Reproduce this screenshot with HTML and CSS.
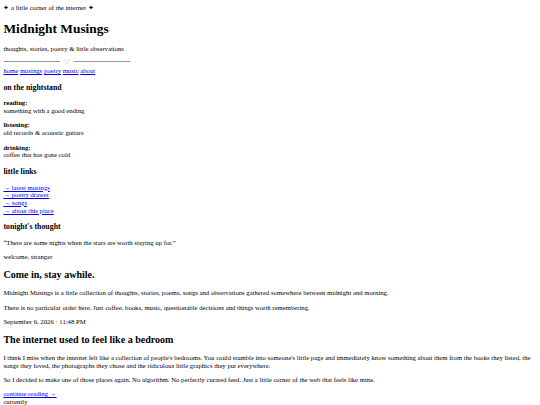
FILE: index.html
```html
<!DOCTYPE html>
<html lang="en">
<head>
<meta charset="utf-8">
<title>Midnight Musings</title>
<link rel="stylesheet" href="styles.css">
</head>
<body class="page">
<header class="site-header">
  <div class="tagline">✦ a little corner of the internet ✦</div>
  <h1 class="site-title">Midnight Musings</h1>
  <p class="subtitle">thoughts, stories, poetry &amp; little observations</p>
  <div class="divider"><span class="rule">──────────────</span> <span class="heart">♡</span> <span class="rule">──────────────</span></div>
  <nav class="nav"><a href="#">home</a> <a href="#">musings</a> <a href="#">poetry</a> <a href="#">music</a> <a href="#">about</a></nav>
</header>
<aside class="sidebar">
  <h3 class="side-title">on the nightstand</h3>
  <p class="item"><strong>reading:</strong><br>something with a good ending</p>
  <p class="item"><strong>listening:</strong><br>old records &amp; acoustic guitars</p>
  <p class="item"><strong>drinking:</strong><br>coffee that has gone cold</p>
  <h3 class="side-title">little links</h3>
  <div class="links">
    <a href="#">→ latest musings</a><br>
    <a href="#">→ poetry drawer</a><br>
    <a href="#">→ songs</a><br>
    <a href="#">→ about this place</a>
  </div>
  <h3 class="side-title">tonight's thought</h3>
  <p class="quote">“There are some nights when the stars are worth staying up for.”</p>
  <p class="welcome">welcome, stranger</p>
</aside>
<main class="content">
  <h2 class="intro-title">Come in, stay awhile.</h2>
  <p>Midnight Musings is a little collection of thoughts, stories, poems, songs and observations gathered somewhere between midnight and morning.</p>
  <p>There is no particular order here. Just coffee, books, music, questionable decisions and things worth remembering.</p>
  <article class="post">
    <p class="post-date">September 6, 2026 · 11:48 PM</p>
    <h2 class="post-title">The internet used to feel like a bedroom</h2>
    <p>I think I miss when the internet felt like a collection of people's bedrooms. You could stumble into someone's little page and immediately know something about them from the books they listed, the songs they loved, the photographs they chose and the ridiculous little graphics they put everywhere.</p>
    <p>So I decided to make one of those places again. No algorithm. No perfectly curated feed. Just a little corner of the web that feels like mine.</p>
    <a class="more" href="#">continue reading →</a>
  </article>
  <div class="currently">currently</div>
</main>
</body>
</html>
```
FILE: styles.css
```css
.page {
  margin: 3.4px;
  padding-top: 0.6px;
  font-family: "Liberation Serif", "Times New Roman", serif;
  font-size: 6.7px;
  line-height: 1.149;
  color: #000;
  background: #fff;
}
.divider {
  white-space: nowrap;
  font-family: "DejaVu Sans Mono", monospace;
}
.rule {
  color: #555;
}
.heart {
  font-family: "DejaVu Sans", sans-serif;
  color: #777;
}
a {
  color: #0000ee;
}
```
